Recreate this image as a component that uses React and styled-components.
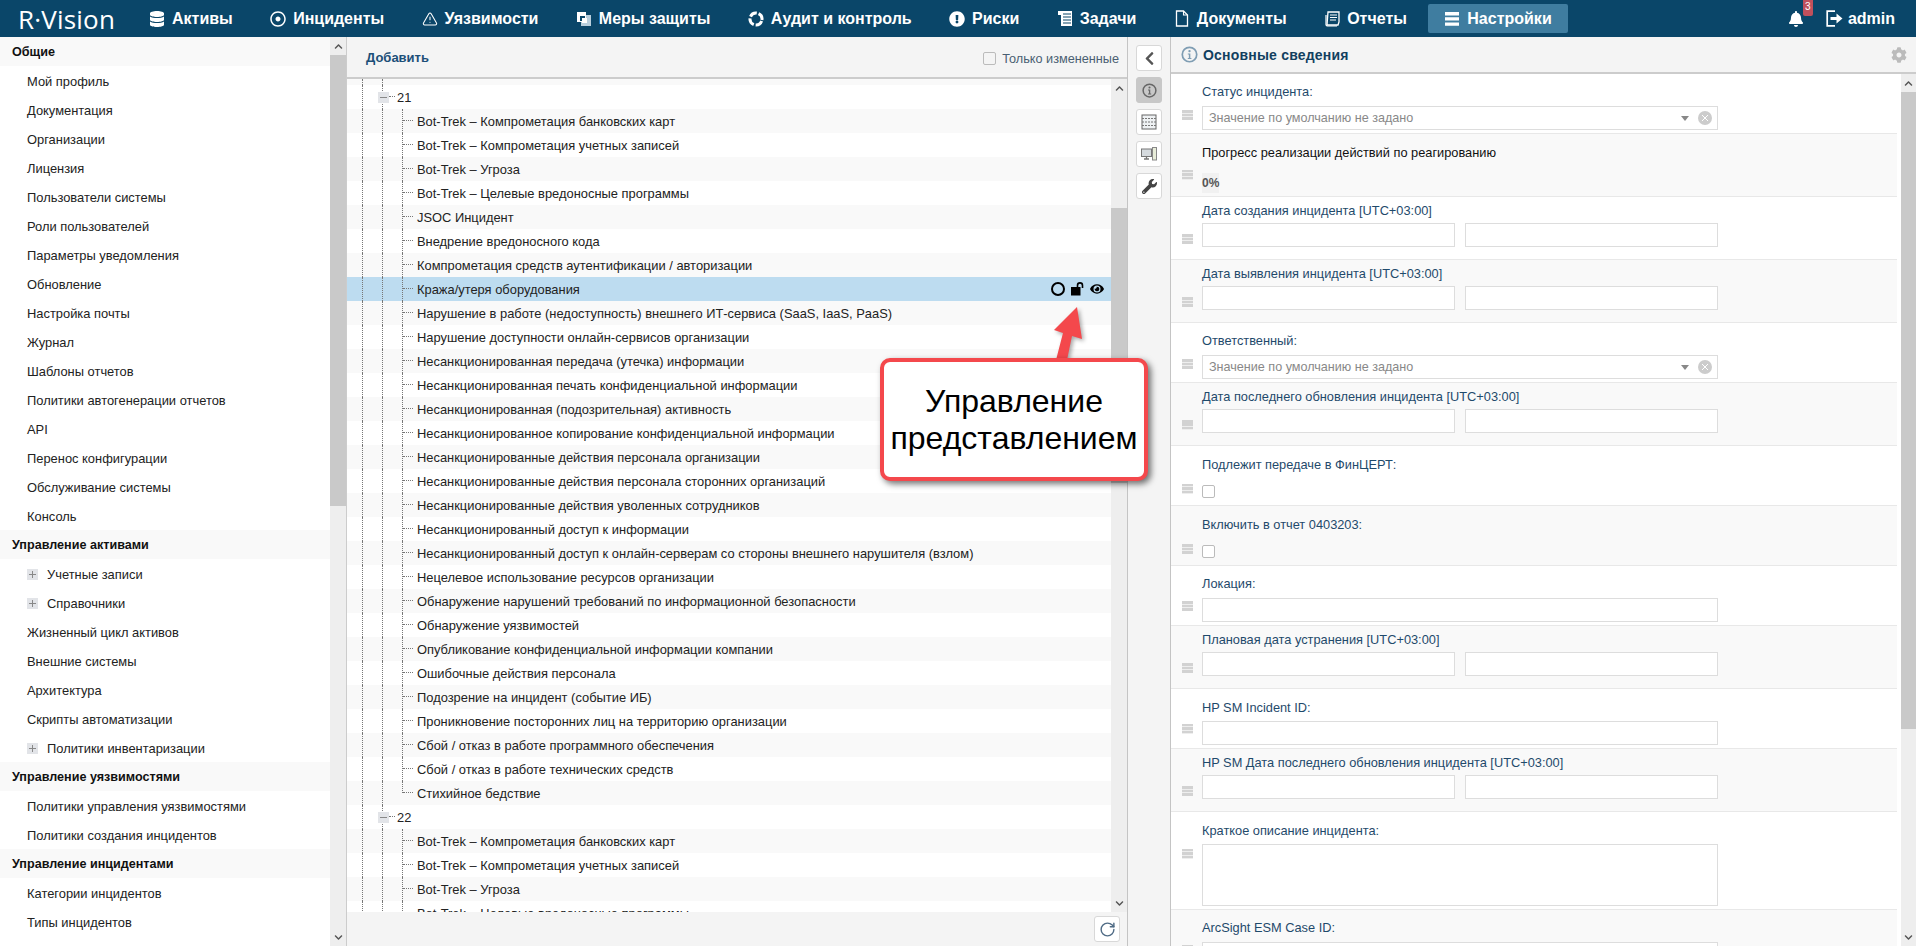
import React from 'react'
import styled, { createGlobalStyle } from 'styled-components'
import {
  FaDatabase, FaRegDotCircle, FaExclamationCircle, FaBell, FaChevronLeft, FaChevronUp, FaChevronDown,
  FaCog, FaWrench, FaEye,
} from 'react-icons/fa'
import { TriangleAlert, RotateCw } from 'lucide-react'

const GlobalStyle = createGlobalStyle`
  html, body { margin: 0; padding: 0; height: 100%; overflow: hidden; }
  body { font-family: "Liberation Sans", Arial, sans-serif; font-size: 12px; color: #222; background: #fff; }
  * { box-sizing: border-box; }
`

const MeasuresIcon = () => (
  <svg width="16" height="16" viewBox="0 0 16 16">
    <rect x="5" y="4" width="10" height="11" fill="#b9cfdd" />
    <rect x="1" y="1" width="9" height="10" fill="#fff" />
    <rect x="4" y="5" width="5" height="5" fill="#0a4669" />
    <rect x="6" y="7" width="5" height="5" fill="#fff" />
  </svg>
)
const AuditIcon = () => (
  <svg width="16" height="16" viewBox="0 0 16 16">
    <circle cx="8" cy="8" r="6" fill="none" stroke="#fff" strokeWidth="3" strokeDasharray="7.4 2" transform="rotate(20 8 8)" />
  </svg>
)
const TasksIcon = () => (
  <svg width="16" height="17" viewBox="0 0 16 17">
    <path d="M1 1h14v15H4V5H1z" fill="#fff" />
    <path d="M6 4h8M6 7h8M6 10h8M6 13h8" stroke="#0a4669" strokeWidth="1.2" />
  </svg>
)
const DocIcon = () => (
  <svg width="15" height="17" viewBox="0 0 15 17">
    <path d="M2 1h7l4 4v11H2z" fill="none" stroke="#fff" strokeWidth="1.3" />
    <path d="M9 1v4h4" fill="none" stroke="#fff" strokeWidth="1.1" />
  </svg>
)
const ReportsIcon = () => (
  <svg width="16" height="16" viewBox="0 0 16 16">
    <path d="M4 1h11v10l-1 3H3z" fill="none" stroke="#fff" strokeWidth="1.3" />
    <path d="M2 4v10l1 1h10" fill="none" stroke="#fff" strokeWidth="1.2" />
    <path d="M6 4h7M6 6.5h7M6 9h6" stroke="#fff" strokeWidth="1.1" />
  </svg>
)
const BarsIcon = () => (
  <svg width="16" height="14" viewBox="0 0 16 14">
    <path d="M1 0h14v3.4H1zM1 5.2h14v3.4H1zM1 10.4h14v3.4H1z" fill="#fff" />
  </svg>
)
const ExitIcon = () => (
  <svg width="17" height="17" viewBox="0 0 17 17">
    <path d="M9 1.2H1.2v14.6H9" fill="none" stroke="#fff" strokeWidth="1.7" />
    <path d="M4.5 7h6V3.6l6 4.9-6 4.9V10h-6z" fill="#fff" />
  </svg>
)
const TableIcon = () => (
  <svg width="16" height="16" viewBox="0 0 16 16">
    <rect x="1" y="1" width="14" height="14" fill="#eef1f3" stroke="#666" />
    <path d="M1 4.5h14M1 8h14M1 11.5h14" stroke="#777" strokeDasharray="2 1" />
  </svg>
)
const DevicesIcon = () => (
  <svg width="16" height="14" viewBox="0 0 16 14">
    <rect x="0.5" y="2" width="10" height="7.5" fill="#d5dade" stroke="#777" />
    <path d="M3 12h5M5.5 9.5V12" stroke="#777" strokeWidth="1.3" />
    <rect x="11.5" y="0.5" width="4" height="12.5" fill="#e8edd9" stroke="#888" />
  </svg>
)
const InfoRing = ({ size = 15, color = '#666' }) => (
  <svg width={size} height={size} viewBox="0 0 16 16">
    <circle cx="8" cy="8" r="6.8" fill="none" stroke={color} strokeWidth="1.6" />
    <circle cx="8" cy="4.8" r="1.1" fill={color} />
    <path d="M6.4 7h2.4v4.2h1v1H6.4v-1h1V8H6.4z" fill={color} />
  </svg>
)
const OpenLock = () => (
  <svg width="13" height="14" viewBox="0 0 13 14">
    <rect x="0" y="5" width="9.5" height="8.5" fill="#000" />
    <path d="M6.5 5.5V3.4a2.5 2.5 0 0 1 5 0V6" fill="none" stroke="#000" strokeWidth="1.6" />
  </svg>
)

const Page = styled.div`
  position: relative;
  display: flex;
  flex-direction: column;
  height: 946px;
  overflow: hidden;
`
const Header = styled.header`
  display: flex;
  align-items: center;
  height: 37px;
  flex: 0 0 37px;
  padding-left: 18px;
  background: #0a4669;
  color: #fff;
`
const Logo = styled.div`
  width: 115px;
  font-family: "Open Sans", sans-serif;
  font-size: 26px;
  font-weight: 400;
  letter-spacing: 0.2px;
  white-space: nowrap;
`
const NavItem = styled.a`
  display: flex;
  align-items: center;
  gap: 7px;
  height: 29px;
  padding: 0 16px;
  margin-right: 5.4px;
  border-radius: 2px;
  background: ${(p) => (p.$active ? '#3f7da0' : 'transparent')};
  font-size: 16px;
  font-weight: 700;
  white-space: nowrap;
  svg { flex: 0 0 16px; width: 16px; }
`
const UserArea = styled.div`
  display: flex;
  align-items: center;
  margin-left: auto;
  padding-right: 21px;
  font-size: 16px;
  font-weight: 700;
`
const BellWrap = styled.div`
  position: relative;
  display: flex;
  margin-right: 22px;
  font-size: 16px;
`
const Badge = styled.span`
  position: absolute;
  top: -11px;
  left: 15px;
  width: 10px;
  height: 16px;
  border-radius: 0 0 2px 2px;
  background: #c0505c;
  font-size: 10px;
  font-weight: 400;
  line-height: 14px;
  text-align: center;
`
const Admin = styled.span`
  margin-left: 5px;
`

const Main = styled.div`
  display: flex;
  flex: 1;
  min-height: 0;
`
const Sidebar = styled.aside`
  display: flex;
  flex: 0 0 347px;
  border-right: 1px solid #ccc;
`
const SideList = styled.div`
  flex: 1;
  overflow: hidden;
`
const SideGroup = styled.div`
  height: 29px;
  padding-left: 12px;
  background: #f9f9f9;
  color: #111;
  font-size: 12.6px;
  font-weight: 700;
  line-height: 31px;
  white-space: nowrap;
`
const SideItem = styled.div`
  display: flex;
  align-items: center;
  gap: 9px;
  height: 29px;
  padding: 2px 0 0 27px;
  color: #222;
  font-size: 12.9px;
  white-space: nowrap;
`
const PlusBox = styled.span`
  position: relative;
  flex: 0 0 11px;
  width: 11px;
  height: 11px;
  background: #e2e4e8;
  &::before { content: ''; position: absolute; left: 2px; right: 2px; top: 5px; height: 1px; background: #888; }
  &::after { content: ''; position: absolute; top: 2px; bottom: 2px; left: 5px; width: 1px; background: ${(p) => (p.$minus ? 'transparent' : '#888')}; }
`

const ScrollTrack = styled.div`
  display: flex;
  flex-direction: column;
  flex: 0 0 ${(p) => p.$w || 16}px;
  width: ${(p) => p.$w || 16}px;
  background: #eee;
`
const ScrollBtn = styled.div`
  display: flex;
  flex: 0 0 18px;
  align-items: center;
  justify-content: center;
  color: #555;
  font-size: 9px;
`
const ScrollThumb = styled.div`
  flex: 0 0 ${(p) => p.$h}px;
  background: #c9c9c9;
`
const ScrollFill = styled.div`
  flex: 1;
`
const ScrollGap = styled.div`
  flex: 0 0 ${(p) => p.$h}px;
`
const Scrollbar = ({ offset = 0, thumb, w }) => (
  <ScrollTrack $w={w}>
    <ScrollBtn><FaChevronUp /></ScrollBtn>
    <ScrollGap $h={offset} />
    <ScrollThumb $h={thumb} />
    <ScrollFill />
    <ScrollBtn><FaChevronDown /></ScrollBtn>
  </ScrollTrack>
)

const Center = styled.section`
  display: flex;
  flex-direction: column;
  flex: 0 0 781px;
  border-right: 1px solid #c4c4c4;
  background: #f4f4f4;
`
const Toolbar = styled.div`
  display: flex;
  align-items: center;
  justify-content: space-between;
  flex: 0 0 42px;
  padding: 0 8px 0 19px;
  border-bottom: 2px solid #ccc;
`
const AddLink = styled.a`
  color: #1c4f78;
  font-size: 13px;
  font-weight: 700;
`
const OnlyChanged = styled.label`
  display: flex;
  align-items: center;
  gap: 6px;
  padding-top: 3px;
  color: #4a5f72;
  font-size: 12.7px;
`
const CheckBox = styled.span`
  display: block;
  flex: 0 0 13px;
  width: 13px;
  height: 13px;
  border: 1px solid #bbb;
  border-radius: 2px;
  background: ${(p) => p.$bg || '#fff'};
`
const TreeArea = styled.div`
  display: flex;
  flex: 1;
  min-height: 0;
`
const TreeList = styled.div`
  flex: 1;
  overflow: hidden;
  background: #fff;
`
const TreeRow = styled.div`
  display: flex;
  align-items: stretch;
  height: ${(p) => p.$h || 24}px;
  padding-left: 15px;
  background: ${(p) => (p.$selected ? '#bddcf0' : p.$odd ? '#f9f9f9' : '#fff')};
`
const Guide = styled.span`
  position: relative;
  flex: 0 0 ${(p) => p.$w || 20}px;
  height: ${(p) => (p.$last ? '50%' : '100%')};
  border-left: 1px dotted #777;
`
const Tick = styled.span`
  position: absolute;
  left: ${(p) => p.$left || 0}px;
  top: 11px;
  width: ${(p) => p.$w || 10}px;
  border-top: 1px dotted #777;
`
const TreeBox = styled(PlusBox)`
  position: absolute;
  left: -5px;
  top: 7px;
  width: 11px;
`
const TreeText = styled.span`
  color: #222;
  font-size: 12.9px;
  line-height: 26px;
  white-space: nowrap;
`
const RowActions = styled.span`
  display: flex;
  align-items: center;
  gap: 6px;
  margin-left: auto;
  padding-right: 7px;
  color: #000;
  font-size: 14px;
`
const RingIcon = styled.span`
  display: block;
  width: 14px;
  height: 14px;
  border: 2px solid #000;
  border-radius: 50%;
`
const TreeFooter = styled.div`
  display: flex;
  align-items: center;
  justify-content: flex-end;
  flex: 0 0 34px;
  padding-right: 7px;
`
const IconButton = styled.button`
  display: flex;
  align-items: center;
  justify-content: center;
  width: 26px;
  height: 26px;
  padding: 0;
  border: 1px solid ${(p) => (p.$active ? '#c8c8c8' : '#d8d8d8')};
  border-radius: 3px;
  background: ${(p) => (p.$active ? '#c8c8c8' : '#fff')};
  color: #555;
`
const Strip = styled.nav`
  display: flex;
  flex-direction: column;
  flex: 0 0 43px;
  gap: 6px;
  padding: 8px 0 0 8px;
  background: #f4f4f4;
  border-right: 1px solid #c4c4c4;
`

const Details = styled.section`
  display: flex;
  flex-direction: column;
  flex: 1;
  min-width: 0;
`
const DetailsHead = styled.div`
  display: flex;
  align-items: center;
  flex: 0 0 37px;
  padding: 0 9px 0 10px;
  background: #f4f4f4;
  border-bottom: 2px solid #ccc;
  color: #bbb;
  font-size: 16px;
`
const DetailsTitle = styled.h2`
  margin: 0 auto 0 5px;
  color: #123f5f;
  font-size: 14px;
  font-weight: 700;
  letter-spacing: 0.2px;
`
const DetailsBody = styled.div`
  display: flex;
  flex: 1;
  min-height: 0;
`
const Form = styled.div`
  flex: 1;
  padding-right: 4px;
  overflow: hidden;
`
const FieldRow = styled.div`
  display: flex;
  flex: none;
  height: ${(p) => p.$h}px;
  border-bottom: 1px solid #e8e8e8;
  background: ${(p) => (p.$odd ? '#f9f9f9' : '#fff')};
`
const HandleCol = styled.div`
  display: flex;
  flex: 0 0 31px;
  align-items: flex-end;
  padding: 0 0 ${(p) => p.$bottom}px 11px;
`
const Handle = styled.span`
  display: block;
  width: 11px;
  height: 10px;
  background: repeating-linear-gradient(#d2d2d2 0 2.5px, #eee 2.5px 3.5px);
`
const FieldBody = styled.div`
  flex: 0 0 516px;
  padding-top: ${(p) => p.$top}px;
`
const Label = styled.div`
  height: 14px;
  margin-bottom: ${(p) => p.$gap}px;
  color: ${(p) => (p.$dark ? '#111' : '#1f4a6b')};
  font-size: 12.8px;
  line-height: 14px;
  white-space: nowrap;
`
const Pair = styled.div`
  display: flex;
  justify-content: space-between;
`
const Input = styled.div`
  width: ${(p) => p.$w || '100%'};
  height: ${(p) => p.$h || 24}px;
  border: 1px solid #ddd;
  background: #fff;
`
const SelectBox = styled.div`
  display: flex;
  align-items: center;
  height: 24px;
  padding: 0 5px 0 6px;
  border: 1px solid #ddd;
  background: #fff;
  color: #888;
  font-size: 12.6px;
`
const Caret = styled.span`
  margin: 0 9px 0 auto;
  border-top: 5px solid #888;
  border-left: 4px solid transparent;
  border-right: 4px solid transparent;
`
const Clear = styled.span`
  display: flex;
  align-items: center;
  justify-content: center;
  width: 14px;
  height: 14px;
  border-radius: 50%;
  background: #ccc;
  svg { display: block; }
`
const Percent = styled.span`
  display: inline-block;
  width: 17px;
  height: 20px;
  background: #f1f1f1;
  color: #555;
  font-size: 12px;
  font-weight: 700;
  line-height: 20px;
`

const Overlay = styled.div`
  position: absolute;
  left: 880px;
  top: 358px;
  width: 268px;
  height: 123px;
  display: flex;
  align-items: center;
  justify-content: center;
  border: 4px solid #f4484c;
  border-radius: 10px;
  background: #fff;
  box-shadow: 3px 3px 6px rgba(0, 0, 0, 0.55);
  color: #000;
  font-size: 32px;
  line-height: 37px;
  text-align: center;
`
const Arrow = styled.svg`
  position: absolute;
  left: 1040px;
  top: 300px;
  filter: drop-shadow(2px 2px 2px rgba(0, 0, 0, 0.35));
`

const nav = [
  [<FaDatabase />, 'Активы'],
  [<FaRegDotCircle />, 'Инциденты'],
  [<TriangleAlert strokeWidth={1.6} size={16} />, 'Уязвимости'],
  [<MeasuresIcon />, 'Меры защиты'],
  [<AuditIcon />, 'Аудит и контроль'],
  [<FaExclamationCircle />, 'Риски'],
  [<TasksIcon />, 'Задачи'],
  [<DocIcon />, 'Документы'],
  [<ReportsIcon />, 'Отчеты'],
  [<BarsIcon />, 'Настройки', true],
]

const side = [
  ['g', 'Общие'],
  ['i', 'Мой профиль'], ['i', 'Документация'], ['i', 'Организации'], ['i', 'Лицензия'],
  ['i', 'Пользователи системы'], ['i', 'Роли пользователей'], ['i', 'Параметры уведомления'],
  ['i', 'Обновление'], ['i', 'Настройка почты'], ['i', 'Журнал'], ['i', 'Шаблоны отчетов'],
  ['i', 'Политики автогенерации отчетов'], ['i', 'API'], ['i', 'Перенос конфигурации'],
  ['i', 'Обслуживание системы'], ['i', 'Консоль'],
  ['g', 'Управление активами'],
  ['p', 'Учетные записи'], ['p', 'Справочники'], ['i', 'Жизненный цикл активов'],
  ['i', 'Внешние системы'], ['i', 'Архитектура'], ['i', 'Скрипты автоматизации'], ['p', 'Политики инвентаризации'],
  ['g', 'Управление уязвимостями'],
  ['i', 'Политики управления уязвимостями'], ['i', 'Политики создания инцидентов'],
  ['g', 'Управление инцидентами'],
  ['i', 'Категории инцидентов'], ['i', 'Типы инцидентов'],
]

const botTrek = [
  'Bot-Trek – Компрометация банковских карт',
  'Bot-Trek – Компрометация учетных записей',
  'Bot-Trek – Угроза',
  'Bot-Trek – Целевые вредоносные программы',
]
const types = [
  ...botTrek,
  'JSOC Инцидент',
  'Внедрение вредоносного кода',
  'Компрометация средств аутентификации / авторизации',
  'Кража/утеря оборудования',
  'Нарушение в работе (недоступность) внешнего ИТ-сервиса (SaaS, IaaS, PaaS)',
  'Нарушение доступности онлайн-сервисов организации',
  'Несанкционированная передача (утечка) информации',
  'Несанкционированная печать конфиденциальной информации',
  'Несанкционированная (подозрительная) активность',
  'Несанкционированное копирование конфиденциальной информации',
  'Несанкционированные действия персонала организации',
  'Несанкционированные действия персонала сторонних организаций',
  'Несанкционированные действия уволенных сотрудников',
  'Несанкционированный доступ к информации',
  'Несанкционированный доступ к онлайн-серверам со стороны внешнего нарушителя (взлом)',
  'Нецелевое использование ресурсов организации',
  'Обнаружение нарушений требований по информационной безопасности',
  'Обнаружение уязвимостей',
  'Опубликование конфиденциальной информации компании',
  'Ошибочные действия персонала',
  'Подозрение на инцидент (событие ИБ)',
  'Проникновение посторонних лиц на территорию организации',
  'Сбой / отказ в работе программного обеспечения',
  'Сбой / отказ в работе технических средств',
  'Стихийное бедствие',
]

const GroupRow = ({ title, odd }) => (
  <TreeRow $odd={odd}>
    <Guide />
    <Guide $w={15}>
      <TreeBox $minus />
      <Tick $left={6} $w={6} />
    </Guide>
    <TreeText>{title}</TreeText>
  </TreeRow>
)
const LeafRow = ({ title, odd, last, selected }) => (
  <TreeRow $odd={odd} $selected={selected}>
    <Guide />
    <Guide />
    <Guide $w={15} $last={last}>
      <Tick />
    </Guide>
    <TreeText>{title}</TreeText>
    {selected && (
      <RowActions>
        <RingIcon />
        <OpenLock />
        <FaEye />
      </RowActions>
    )}
  </TreeRow>
)

const Row = ({ h, odd, handle, top, children }) => (
  <FieldRow $h={h} $odd={odd}>
    <HandleCol $bottom={handle}><Handle /></HandleCol>
    <FieldBody $top={top}>{children}</FieldBody>
  </FieldRow>
)
const SelectField = () => (
  <SelectBox>
    Значение по умолчанию не задано
    <Caret />
    <Clear>
      <svg width="8" height="8" viewBox="0 0 8 8"><path d="M1 1l6 6M7 1l-6 6" stroke="#fff" strokeWidth="1" /></svg>
    </Clear>
  </SelectBox>
)
const DateField = ({ label, odd }) => (
  <Row h={63} odd={odd} handle={15} top={7}>
    <Label $gap={5}>{label}</Label>
    <Pair>
      <Input $w="253px" />
      <Input $w="253px" />
    </Pair>
  </Row>
)
const CheckField = ({ label, odd }) => (
  <Row h={60} odd={odd} handle={11} top={12}>
    <Label $gap={13}>{label}</Label>
    <CheckBox />
  </Row>
)

export default function App() {
  return (
    <Page>
      <GlobalStyle />
      <Header>
        <Logo>R·Vision</Logo>
        {nav.map(([icon, label, active]) => (
          <NavItem key={label} $active={active}>{icon}{label}</NavItem>
        ))}
        <UserArea>
          <BellWrap>
            <FaBell />
            <Badge>3</Badge>
          </BellWrap>
          <ExitIcon />
          <Admin>admin</Admin>
        </UserArea>
      </Header>
      <Main>
        <Sidebar>
          <SideList>
            {side.map(([kind, label]) =>
              kind === 'g' ? (
                <SideGroup key={label}>{label}</SideGroup>
              ) : (
                <SideItem key={label}>
                  {kind === 'p' && <PlusBox />}
                  {label}
                </SideItem>
              )
            )}
          </SideList>
          <Scrollbar thumb={451} />
        </Sidebar>
        <Center>
          <Toolbar>
            <AddLink>Добавить</AddLink>
            <OnlyChanged><CheckBox $bg="#f4f4f4" />Только измененные</OnlyChanged>
          </Toolbar>
          <TreeArea>
            <TreeList>
              <TreeRow $odd $h={6}><Guide /><Guide /></TreeRow>
              <GroupRow title="21" />
              {types.map((t, i) => (
                <LeafRow key={t} title={t} odd={i % 2 === 0} last={i === types.length - 1} selected={i === 7} />
              ))}
              <GroupRow title="22" />
              {botTrek.map((t, i) => (
                <LeafRow key={t} title={t} odd={i % 2 === 0} />
              ))}
            </TreeList>
            <Scrollbar w={16} offset={111} thumb={275} />
          </TreeArea>
          <TreeFooter>
            <IconButton><RotateCw size={17} color="#4f6b85" /></IconButton>
          </TreeFooter>
        </Center>
        <Strip>
          <IconButton><FaChevronLeft size={15} color="#555" /></IconButton>
          <IconButton $active><InfoRing /></IconButton>
          <IconButton><TableIcon /></IconButton>
          <IconButton><DevicesIcon /></IconButton>
          <IconButton><FaWrench size={15} color="#444" /></IconButton>
        </Strip>
        <Details>
          <DetailsHead>
            <InfoRing size={17} color="#7f9db3" />
            <DetailsTitle>Основные сведения</DetailsTitle>
            <FaCog />
          </DetailsHead>
          <DetailsBody>
            <Form>
              <Row h={60} handle={13} top={11}>
                <Label $gap={7}>Статус инцидента:</Label>
                <SelectField />
              </Row>
              <Row h={63} odd handle={16} top={12}>
                <Label $gap={13} $dark>Прогресс реализации действий по реагированию</Label>
                <Percent>0%</Percent>
              </Row>
              <DateField label="Дата создания инцидента [UTC+03:00]" />
              <DateField label="Дата выявления инцидента [UTC+03:00]" odd />
              <Row h={60} handle={13} top={11}>
                <Label $gap={7}>Ответственный:</Label>
                <SelectField />
              </Row>
              <DateField label="Дата последнего обновления инцидента [UTC+03:00]" odd />
              <CheckField label="Подлежит передаче в ФинЦЕРТ:" />
              <CheckField label="Включить в отчет 0403203:" odd />
              <Row h={60} handle={14} top={11}>
                <Label $gap={7}>Локация:</Label>
                <Input />
              </Row>
              <DateField label="Плановая дата устранения [UTC+03:00]" odd />
              <Row h={60} handle={14} top={12}>
                <Label $gap={6}>HP SM Incident ID:</Label>
                <Input />
              </Row>
              <DateField label="HP SM Дата последнего обновления инцидента [UTC+03:00]" odd />
              <Row h={98} handle={50} top={12}>
                <Label $gap={6}>Краткое описание инцидента:</Label>
                <Input $h={62} />
              </Row>
              <Row h={60} odd handle={14} top={11}>
                <Label $gap={7}>ArcSight ESM Case ID:</Label>
                <Input />
              </Row>
            </Form>
            <Scrollbar w={15} thumb={637} />
          </DetailsBody>
        </Details>
      </Main>
      <Arrow width="60" height="62" viewBox="0 0 60 62">
        <path d="M37 7l5 32-10-3-5 24H16l7-27-9-3z" fill="#f4484c" />
      </Arrow>
      <Overlay>Управление<br />представлением</Overlay>
    </Page>
  )
}
